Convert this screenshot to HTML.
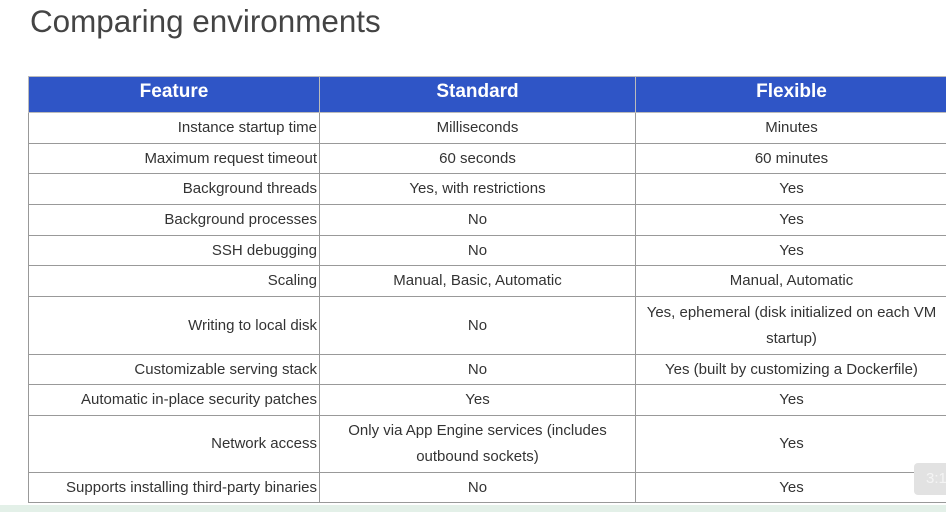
<!DOCTYPE html>
<html><head><style>
body{margin:0;width:946px;height:512px;overflow:hidden;background:#fff;font-family:"Liberation Sans",Arial,sans-serif;position:relative}
h1{position:absolute;left:30px;top:4px;margin:0;font-weight:normal;font-size:31.4px;color:#444}
table{position:absolute;left:28px;top:76px;border-collapse:collapse;width:920px;font-size:15px;color:#333}
td,th{border:1.5px solid #999;padding:0 2px;line-height:26px}
th{background:#2f55c6;color:#fff;font-size:19px;font-weight:bold;height:35px;border-color:#bbb;vertical-align:top;line-height:29px}
td.a{text-align:right;width:286px}
td.b{text-align:center;width:311px}
td.c{text-align:center}
.foot{position:absolute;left:0;top:505px;width:946px;height:7px;background:#e3f0e8}
.ts{position:absolute;left:914px;top:463px;width:40px;height:32px;background:#e2e2e2;border-radius:4px;color:#f4f4f4;font-size:15px;line-height:32px;padding-left:12px}
</style></head><body>
<h1>Comparing environments</h1>
<table>
<tr><th>Feature</th><th>Standard</th><th>Flexible</th></tr>
<tr style="height:31px"><td class="a">Instance startup time</td><td class="b">Milliseconds</td><td class="c">Minutes</td></tr>
<tr style="height:30px"><td class="a">Maximum request timeout</td><td class="b">60 seconds</td><td class="c">60 minutes</td></tr>
<tr style="height:31px"><td class="a">Background threads</td><td class="b">Yes, with restrictions</td><td class="c">Yes</td></tr>
<tr style="height:31px"><td class="a">Background processes</td><td class="b">No</td><td class="c">Yes</td></tr>
<tr style="height:30px"><td class="a">SSH debugging</td><td class="b">No</td><td class="c">Yes</td></tr>
<tr style="height:31px"><td class="a">Scaling</td><td class="b">Manual, Basic, Automatic</td><td class="c">Manual, Automatic</td></tr>
<tr style="height:58px"><td class="a">Writing to local disk</td><td class="b">No</td><td class="c">Yes, ephemeral (disk initialized on each VM startup)</td></tr>
<tr style="height:30px"><td class="a">Customizable serving stack</td><td class="b">No</td><td class="c">Yes (built by customizing a Dockerfile)</td></tr>
<tr style="height:31px"><td class="a">Automatic in-place security patches</td><td class="b">Yes</td><td class="c">Yes</td></tr>
<tr style="height:57px"><td class="a">Network access</td><td class="b">Only via App Engine services (includes outbound sockets)</td><td class="c">Yes</td></tr>
<tr style="height:30px"><td class="a">Supports installing third-party binaries</td><td class="b">No</td><td class="c">Yes</td></tr>
</table>
<div class="ts">3:1</div>
<div class="foot"></div>
</body></html>
